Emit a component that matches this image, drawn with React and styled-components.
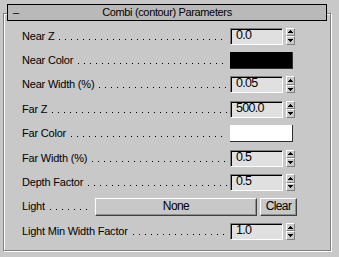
import React from 'react';
import styled, { createGlobalStyle } from 'styled-components';

const GlobalStyle = createGlobalStyle`
  html, body {
    margin: 0;
    padding: 0;
    background: #c8c8c8;
  }
  body {
    font-family: "Liberation Sans", Arial, sans-serif;
    font-size: 11px;
    color: #000;
  }
`;

const Rollout = styled.div`
  width: 339px;
  height: 257px;
  box-sizing: border-box;
  padding-top: 4px;
  background: #c8c8c8;
  overflow: hidden;
`;

const Header = styled.div`
  position: relative;
  z-index: 1;
  box-sizing: border-box;
  width: 320px;
  height: 17px;
  margin-left: 7px;
  border: 1px solid #000;
  background: #b9b9b9;
  display: grid;
  grid-template-columns: 1fr auto 1fr;
  align-items: center;
  line-height: 15px;
`;

const Title = styled.span`
  letter-spacing: -0.35px;
`;

const Collapse = styled.span`
  padding-left: 5px;
`;

const Group = styled.div`
  box-sizing: border-box;
  width: 328px;
  height: 238px;
  margin: -8px 0 0 3px;
  border: 1px solid #808080;
  box-shadow: inset 1px 1px 0 #fff, 1px 1px 0 #fff;
  padding: 10px 0 0 18px;
  display: grid;
  grid-auto-rows: 24.4px;
`;

const Row = styled.div`
  display: grid;
  grid-template-columns: ${p => p.$cols || '208px auto'};
  column-gap: ${p => p.$gap || 0}px;
  align-items: center;
`;

const Label = styled.div`
  display: flex;
  align-items: baseline;
  white-space: nowrap;
  padding-right: 3px;
  line-height: 13px;
  letter-spacing: -0.2px;
`;

// dotted leader drawn as 1px dots, every 6px, sitting on the baseline
const Dots = styled.span`
  flex: 1;
  height: 1px;
  margin-left: 5px;
  background-image: linear-gradient(to right, #000 1px, transparent 1px);
  background-size: 6px 1px;
  background-repeat: repeat-x;
`;

const Control = styled.div`
  display: flex;
  align-items: center;
`;

const Edit = styled.div`
  box-sizing: border-box;
  width: 53px;
  height: 17px;
  border: 1px solid;
  border-color: #808080 #fff #fff #808080;
  box-shadow: inset 1px 1px 0 #000;
  background: #e0e0e0;
  padding-left: 5px;
  font-size: 12.5px;
  letter-spacing: -0.7px;
  line-height: 13px;
  white-space: nowrap;
  overflow: hidden;
`;

const Spinner = styled.div`
  display: flex;
  flex-direction: column;
  width: 9px;
  height: 17px;
  margin-left: 3px;
`;

const SpinButton = styled.div`
  flex: 1;
  box-sizing: border-box;
  border: 1px solid;
  border-color: #fff #808080 #808080 #fff;
  display: flex;
  align-items: center;
  justify-content: center;
`;

const Swatch = styled.div`
  box-sizing: border-box;
  width: 63px;
  height: 17px;
  background: ${p => p.$color};
  border-right: 1px solid #303030;
  border-bottom: 1px solid #303030;
`;

const Button = styled.div`
  box-sizing: border-box;
  height: 18px;
  border: 1px solid;
  border-color: #fff #404040 #404040 #fff;
  box-shadow: inset -1px -1px 0 #909090;
  text-align: center;
  font-size: 12px;
  letter-spacing: -0.6px;
  line-height: 15px;
`;

const Arrow = ({ down }) => (
  <svg width="5" height="3" viewBox="0 0 5 3" shapeRendering="crispEdges">
    <path d={down ? 'M0 0 H5 L2.5 3 Z' : 'M2.5 0 L5 3 H0 Z'} fill="#000" />
  </svg>
);

const LeaderLabel = ({ children }) => (
  <Label>
    {children}
    <Dots />
  </Label>
);

const SpinnerRow = ({ label, value }) => (
  <Row>
    <LeaderLabel>{label}</LeaderLabel>
    <Control>
      <Edit>{value}</Edit>
      <Spinner>
        <SpinButton><Arrow /></SpinButton>
        <SpinButton><Arrow down /></SpinButton>
      </Spinner>
    </Control>
  </Row>
);

const ColorRow = ({ label, color }) => (
  <Row>
    <LeaderLabel>{label}</LeaderLabel>
    <Control>
      <Swatch $color={color} />
    </Control>
  </Row>
);

export default function App() {
  return (
    <>
      <GlobalStyle />
      <Rollout>
        <Header>
          <Collapse>–</Collapse>
          <Title>Combi (contour) Parameters</Title>
          <span />
        </Header>
        <Group>
          <SpinnerRow label="Near Z" value="0.0" />
          <ColorRow label="Near Color" color="#000" />
          <SpinnerRow label="Near Width (%)" value="0.05" />
          <SpinnerRow label="Far Z" value="500.0" />
          <ColorRow label="Far Color" color="#fff" />
          <SpinnerRow label="Far Width (%)" value="0.5" />
          <SpinnerRow label="Depth Factor" value="0.5" />
          <Row $cols="70px 162px 37px" $gap={3}>
            <LeaderLabel>Light</LeaderLabel>
            <Button>None</Button>
            <Button>Clear</Button>
          </Row>
          <SpinnerRow label="Light Min Width Factor" value="1.0" />
        </Group>
      </Rollout>
    </>
  );
}
